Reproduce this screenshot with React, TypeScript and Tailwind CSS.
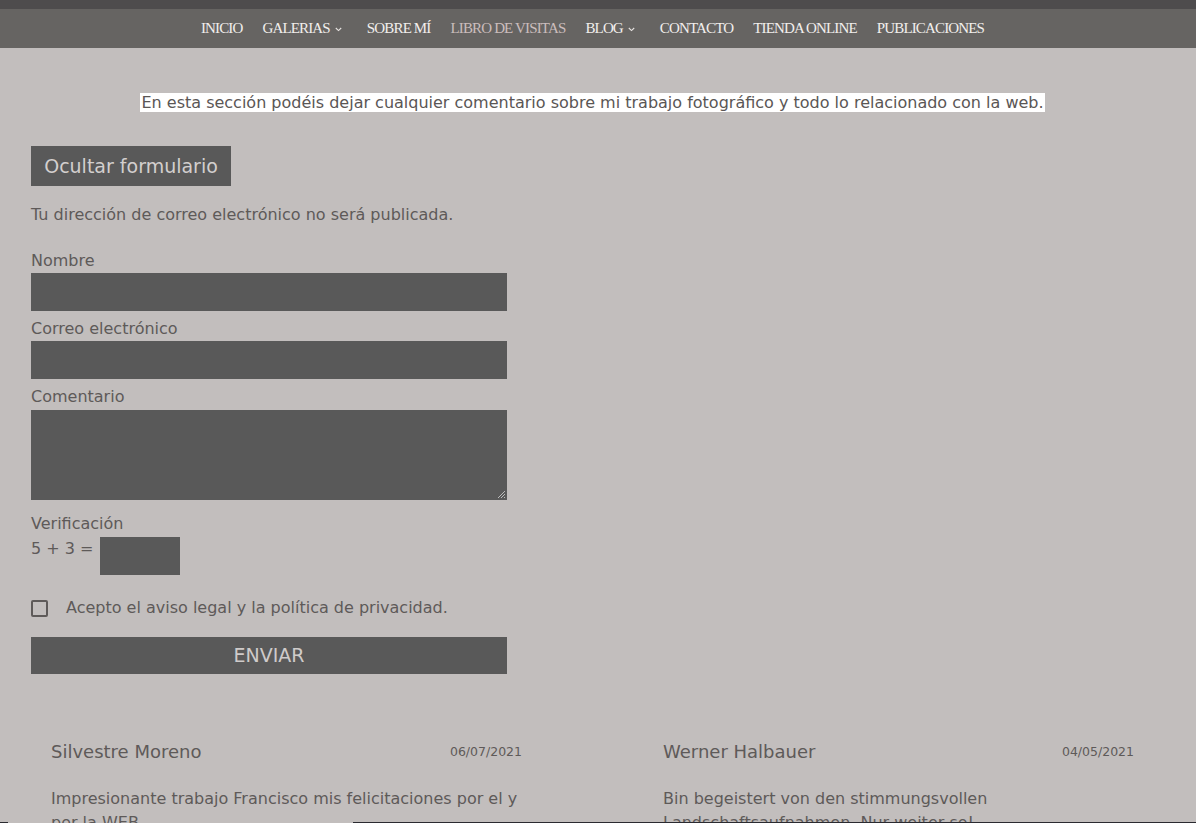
import React from "react";

const Chevron = () => (
  <svg width="7" height="5" viewBox="0 0 7 5" className="ml-[5px] mr-[5px] mt-[1px]" fill="none">
    <path d="M0.8 1 L3.5 3.6 L6.2 1" stroke="#e8e4e2" strokeWidth="1.1" />
  </svg>
);

const navItems: { label: string; chevron?: boolean; active?: boolean }[] = [
  { label: "INICIO" },
  { label: "GALERIAS", chevron: true },
  { label: "SOBRE MÍ" },
  { label: "LIBRO DE VISITAS", active: true },
  { label: "BLOG", chevron: true },
  { label: "CONTACTO" },
  { label: "TIENDA ONLINE" },
  { label: "PUBLICACIONES" },
];

export default function App() {
  const body = { fontFamily: '"DejaVu Sans", Verdana, Tahoma, sans-serif' };
  return (
    <div className="min-h-[823px] bg-[#c2bebd] text-[#5e5a59] relative overflow-hidden" style={body}>
      <div className="h-[9px] bg-[#4e4c4d]" />
      <nav
        className="h-[39px] bg-[#666462] flex items-center justify-center gap-[20px] pr-[11px] text-[15px] tracking-[-0.85px]"
        style={{ fontFamily: '"Liberation Serif", serif' }}
      >
        {navItems.map((n) => (
          <div key={n.label} className={`flex items-center ${n.active ? "text-[#cbbdbd]" : "text-[#f2efed]"}`}>
            <span>{n.label}</span>
            {n.chevron && <Chevron />}
          </div>
        ))}
      </nav>

      <div className="pt-[45px] pr-[11px] flex justify-center">
        <span className="bg-white text-[#5a5655] text-[16px] leading-[19px] px-[1px]">
          En esta sección podéis dejar cualquier comentario sobre mi trabajo fotográfico y todo lo relacionado con la web.
        </span>
      </div>

      <div className="pl-[31px] pt-[34px]">
        <button className="h-[40px] w-[200px] bg-[#595959] text-[#d3cfce] text-[19px]">Ocultar formulario</button>
        <p className="mt-[19px] text-[16px] leading-[20px]">Tu dirección de correo electrónico no será publicada.</p>

        <label className="block mt-[26px] text-[16px] leading-[20px]">Nombre</label>
        <div className="mt-[2px] h-[38px] w-[476px] bg-[#595959]" />
        <label className="block mt-[8px] text-[16px] leading-[20px]">Correo electrónico</label>
        <div className="mt-[2px] h-[38px] w-[476px] bg-[#595959]" />
        <label className="block mt-[8px] text-[16px] leading-[20px]">Comentario</label>
        <div className="mt-[3px] h-[90px] w-[476px] bg-[#595959] relative">
          <svg width="9" height="9" viewBox="0 0 9 9" className="absolute right-[1px] bottom-[1px]">
            <path d="M8 1 L1 8 M8 4 L4 8 M8 7 L7 8" stroke="#bbb" strokeWidth="1" />
          </svg>
        </div>

        <label className="block mt-[14px] text-[16px] leading-[20px]">Verificación</label>
        <div className="flex items-start mt-[3px]">
          <span className="text-[16px] leading-[20px] mt-[2px] mr-[7px]">5 + 3 =</span>
          <div className="h-[38px] w-[80px] bg-[#595959]" />
        </div>

        <div className="flex items-center mt-[23px]">
          <div className="w-[17px] h-[17px] border-2 border-[#5e5a59] rounded-[2px]" />
          <span className="ml-[18px] text-[16px] leading-[20px]">Acepto el aviso legal y la política de privacidad.</span>
        </div>

        <button className="mt-[19px] h-[37px] w-[476px] bg-[#595959] text-[#cfcbca] text-[19px]">ENVIAR</button>
      </div>

      <div className="flex pl-[51px] pt-[67px] gap-[141px]">
        <div className="w-[471px]">
          <div className="flex justify-between items-center">
            <span className="text-[18px] leading-[22px]">Silvestre Moreno</span>
            <span className="text-[12.5px]">06/07/2021</span>
          </div>
          <p className="mt-[24px] text-[16px] leading-[24px]">
            Impresionante trabajo Francisco mis felicitaciones por el y
            <br />
            por la WEB.
          </p>
        </div>
        <div className="w-[471px]">
          <div className="flex justify-between items-center">
            <span className="text-[18px] leading-[22px]">Werner Halbauer</span>
            <span className="text-[12.5px]">04/05/2021</span>
          </div>
          <p className="mt-[24px] text-[16px] leading-[24px]">
            Bin begeistert von den stimmungsvollen
            <br />
            Landschaftsaufnahmen. Nur weiter so!
          </p>
        </div>
      </div>

      <div className="fixed left-0 right-0 bottom-0 h-[1px] flex">
        <div className="w-[8px] bg-[#2a2a30]" />
        <div className="w-[345px]" />
        <div className="flex-1 bg-[#2a2a30]" />
      </div>
    </div>
  );
}
